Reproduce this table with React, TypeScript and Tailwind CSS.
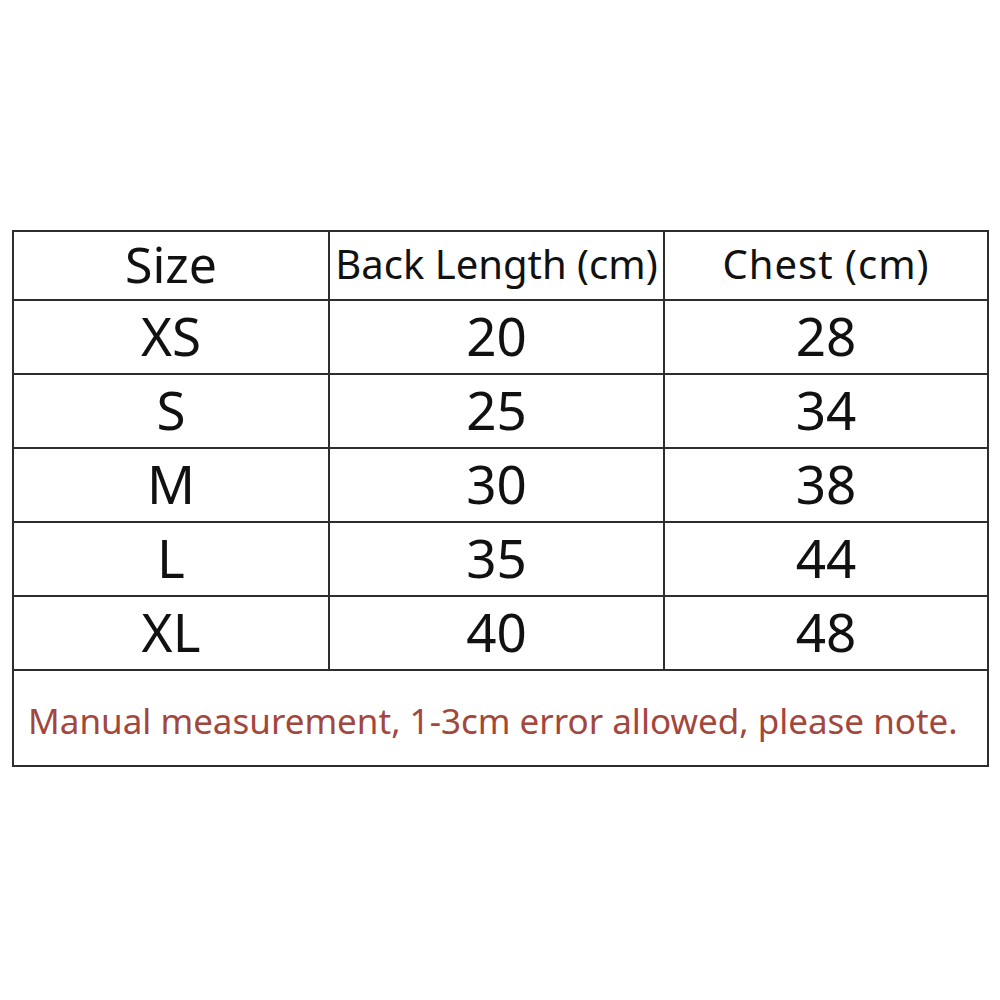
import React from "react";

const rows = [
  ["XS", "20", "28"],
  ["S", "25", "34"],
  ["M", "30", "38"],
  ["L", "35", "44"],
  ["XL", "40", "48"],
];

export default function App() {
  return (
    <div
      className="w-[1000px] h-[1000px] bg-white pt-[230px] pl-[12px]"
      style={{ fontFamily: '"Noto Sans", "Open Sans", sans-serif' }}
    >
      <div className="w-[977px] border-2 border-[#2e2e2e] text-[#111]">
        <div className="grid grid-cols-[316px_335px_322px] h-[69px] border-b-2 border-[#2e2e2e]">
          <div className="flex items-center justify-center border-r-2 border-[#2e2e2e] text-[50px] leading-none pb-1">
            Size
          </div>
          <div className="flex items-center justify-center border-r-2 border-[#2e2e2e] text-[40px] leading-none pb-1">
            Back Length (cm)
          </div>
          <div className="flex items-center justify-center text-[40px] tracking-[1px] leading-none pb-1">
            Chest (cm)
          </div>
        </div>
        {rows.map((r, i) => (
          <div
            key={i}
            className="grid grid-cols-[316px_335px_322px] h-[74px] border-b-2 border-[#2e2e2e] text-[53px] leading-none"
          >
            <div className="flex items-center justify-center border-r-2 border-[#2e2e2e] pb-1">{r[0]}</div>
            <div className="flex items-center justify-center border-r-2 border-[#2e2e2e] pb-1">{r[1]}</div>
            <div className="flex items-center justify-center pb-1">{r[2]}</div>
          </div>
        ))}
        <div className="h-[94px] flex items-center pl-[14px] text-[35px] text-[#a3463c] leading-none pt-1">
          Manual measurement, 1-3cm error allowed, please note.
        </div>
      </div>
    </div>
  );
}
